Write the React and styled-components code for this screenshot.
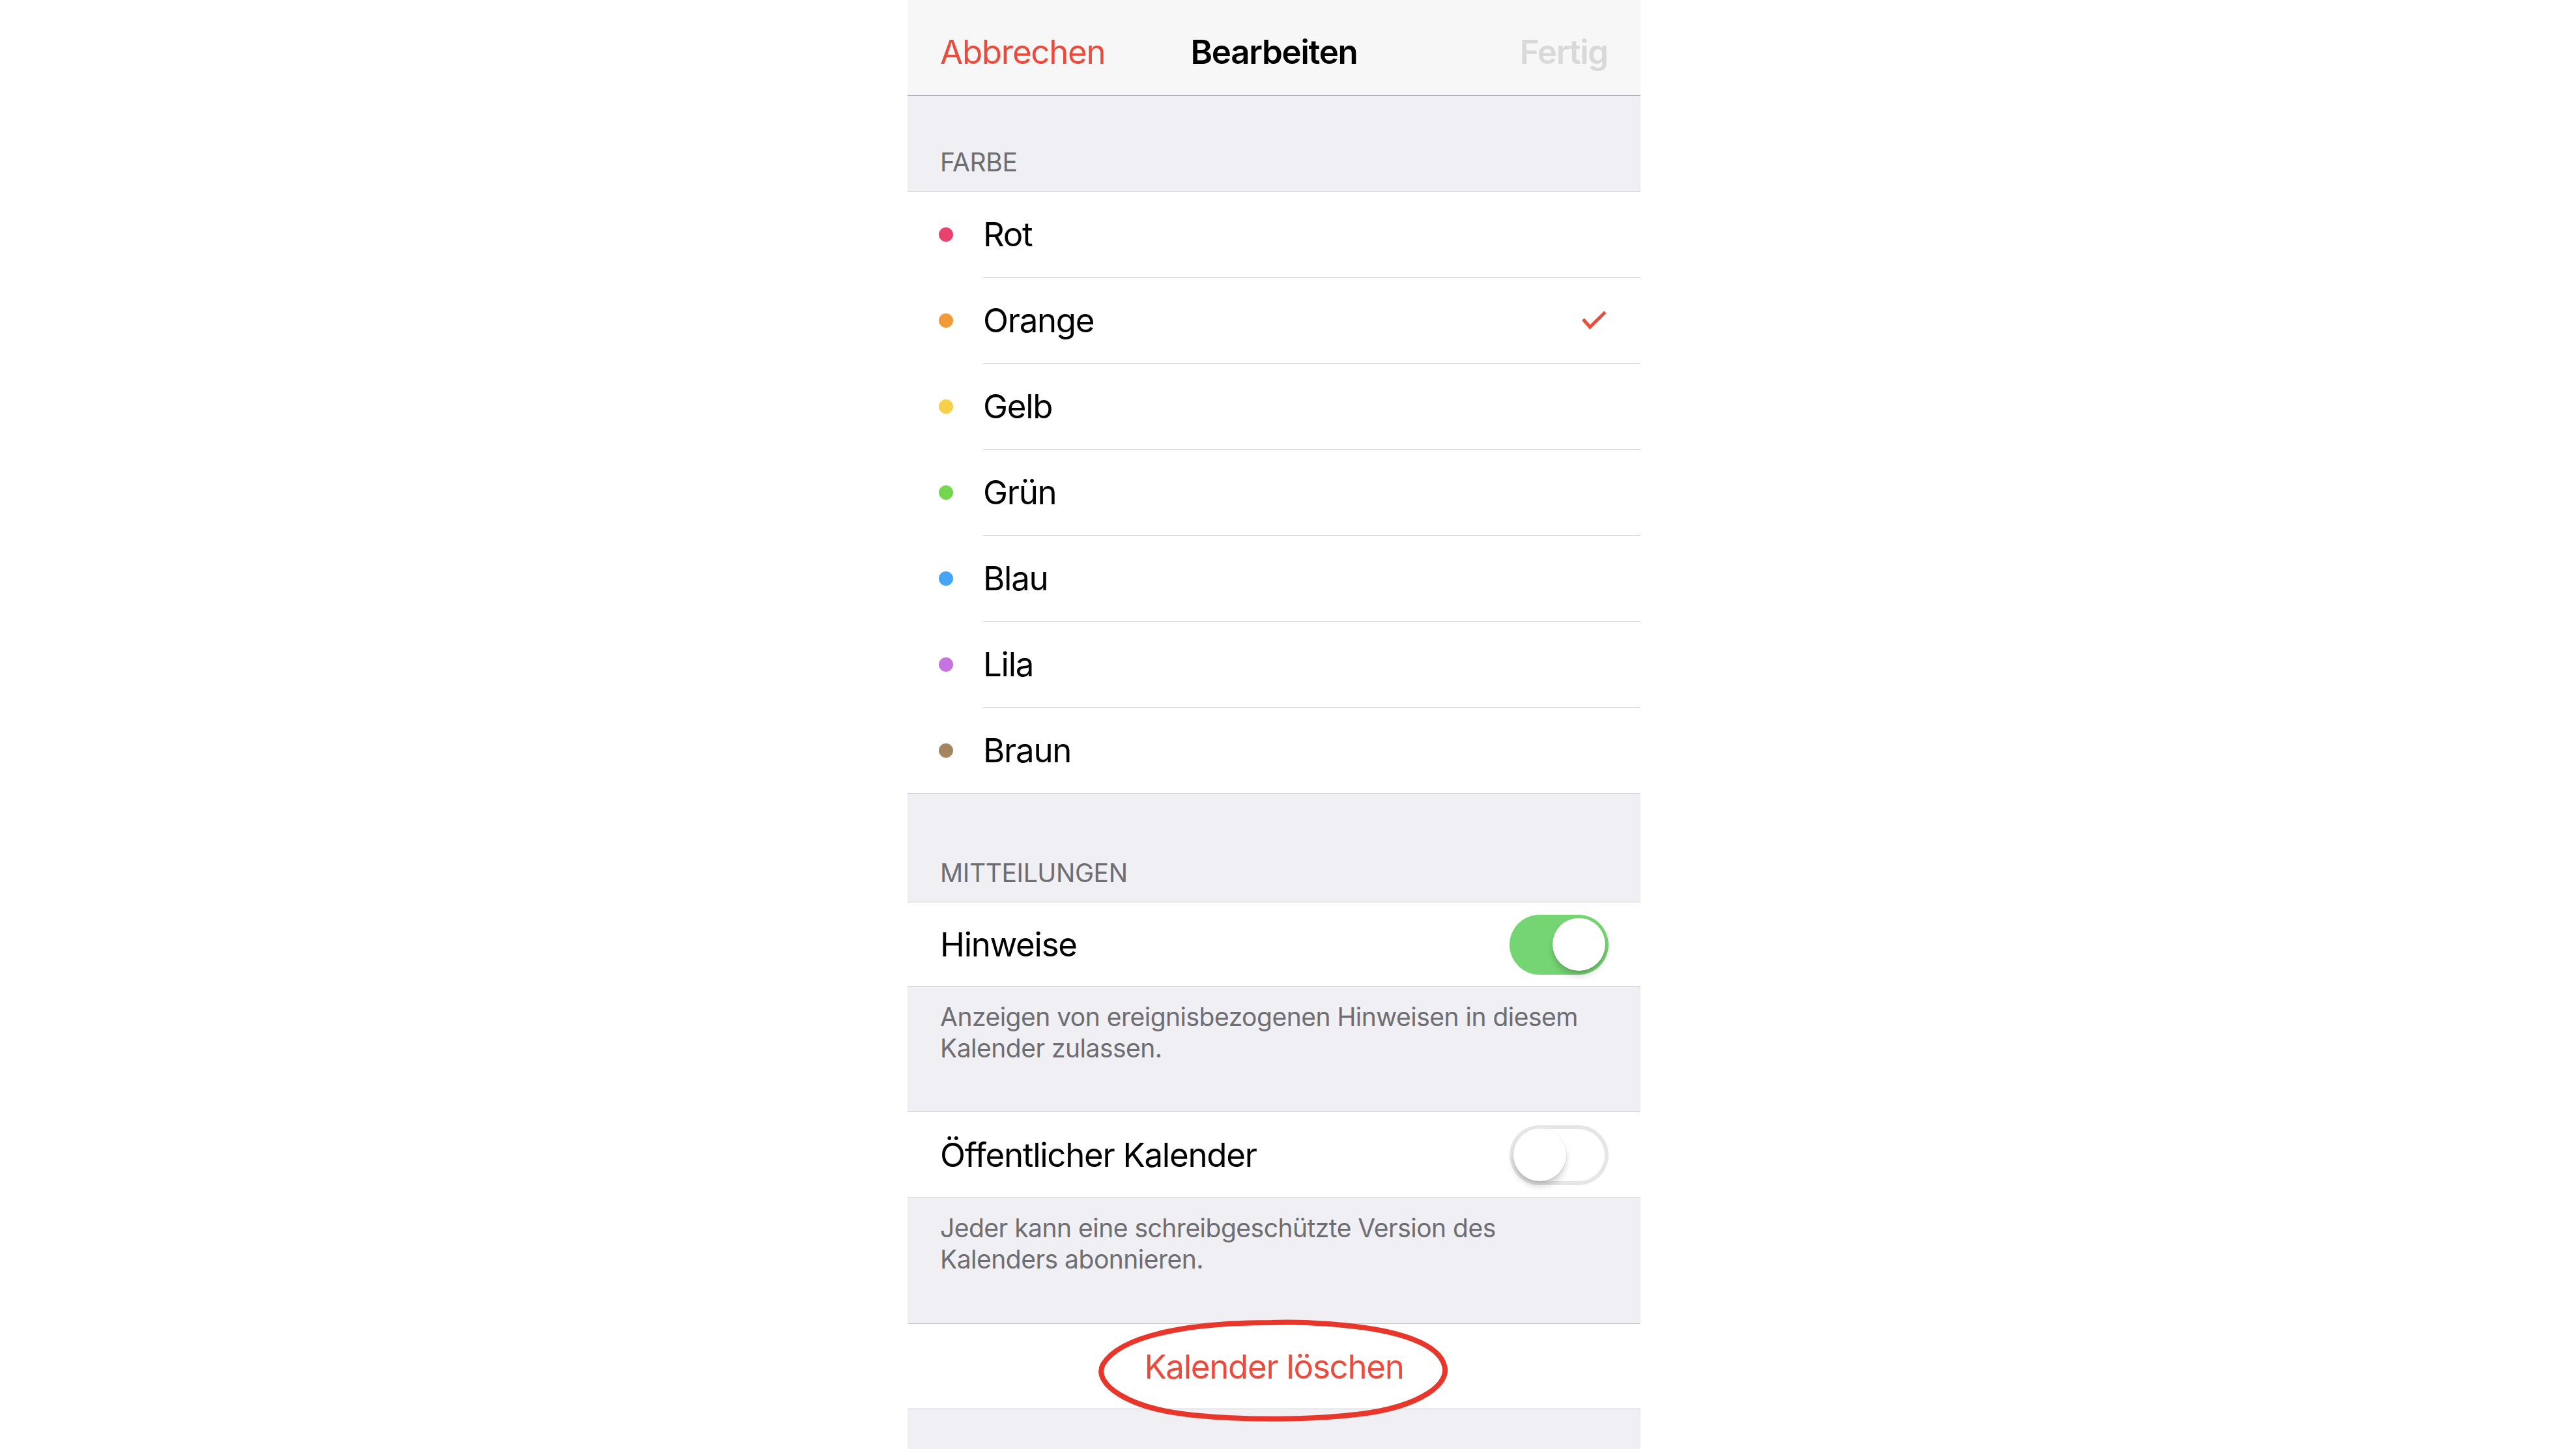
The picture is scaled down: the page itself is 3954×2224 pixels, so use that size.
import React from "react";
import styled, { createGlobalStyle } from "styled-components";

const Global = createGlobalStyle`
  html, body { margin: 0; padding: 0; background: #ffffff; }
  body { font-family: Inter, "Noto Sans", "Liberation Sans", sans-serif; -webkit-font-smoothing: antialiased; }
`;

const Page = styled.div`
  display: flex;
  justify-content: flex-start;
  padding-left: 1393px;
  min-height: 100vh;
  background: #ffffff;
`;

const Panel = styled.div`
  width: 1125px;
  min-height: 2224px;
  background: #efeff4;
  display: flex;
  flex-direction: column;
  font-family: Inter, "Noto Sans", "Liberation Sans", sans-serif;
`;

const NavBar = styled.div`
  box-sizing: border-box;
  height: 147px;
  padding: 13px 50px 0;
  background: #f7f7f7;
  border-bottom: 1px solid #acacb0;
  display: grid;
  grid-template-columns: 1fr auto 1fr;
  align-items: center;
  font-size: 51px;
  letter-spacing: -0.025em;
`;

const NavButton = styled.span`
  justify-self: ${(p) => (p.$end ? "end" : "start")};
  color: ${(p) => (p.$disabled ? "#d9d9d9" : "#ec4b3c")};
  font-weight: ${(p) => (p.$bold ? 600 : 400)};
`;

const NavTitle = styled.span`
  color: #000;
  font-weight: 600;
`;

const SectionHeader = styled.div`
  box-sizing: border-box;
  height: ${(p) => p.$h}px;
  display: flex;
  align-items: flex-end;
  padding: 0 50px 20px;
  font-size: 39px;
  line-height: 48px;
  color: #6d6d72;
  text-transform: uppercase;
  letter-spacing: -0.01em;
`;

const Group = styled.div`
  position: relative;
  background: #ffffff;
  border-top: 1px solid #c8c7cc;
  border-bottom: 1px solid #c8c7cc;
`;

const ColorRow = styled.div`
  display: flex;
  align-items: stretch;
`;

const DotCell = styled.div`
  width: 116px;
  flex: none;
  display: flex;
  align-items: center;
  padding-left: 48px;
  box-sizing: border-box;
`;

const Dot = styled.span`
  width: 22px;
  height: 22px;
  border-radius: 50%;
  background: ${(p) => p.$color};
`;

const RowContent = styled.div`
  flex: 1;
  height: 131px;
  display: flex;
  align-items: center;
  justify-content: space-between;
  padding-right: 52px;
  border-bottom: ${(p) => (p.$last ? "none" : "1px solid #c8c7cc")};
`;

const Label = styled.span`
  font-size: 51px;
  color: #000;
  letter-spacing: -0.025em;
`;

const ToggleRow = styled.div`
  height: ${(p) => p.$h}px;
  display: flex;
  align-items: center;
  justify-content: space-between;
  padding: 0 49px 0 50px;
`;

const Track = styled.span`
  box-sizing: border-box;
  width: 152px;
  height: 92px;
  border-radius: 46px;
  padding: 0 ${(p) => (p.$on ? 5 : 6)}px;
  display: flex;
  align-items: center;
  justify-content: ${(p) => (p.$on ? "flex-end" : "flex-start")};
  background: ${(p) => (p.$on ? "#75d572" : "#ffffff")};
  box-shadow: ${(p) => (p.$on ? "none" : "inset 0 0 0 6px #e6e6e8")};
`;

const Knob = styled.span`
  width: 81px;
  height: 81px;
  border-radius: 50%;
  background: #ffffff;
  box-shadow: 0 8px 10px rgba(0, 0, 0, 0.16), 0 2px 2px rgba(0, 0, 0, 0.08),
    0 0 0 1px rgba(0, 0, 0, 0.03);
`;

const Footer = styled.div`
  box-sizing: border-box;
  height: ${(p) => p.$h}px;
  padding: 22px 50px 0;
  font-size: 39px;
  line-height: 48px;
  color: #6d6d72;
  letter-spacing: -0.013em;
`;

const ActionRow = styled.div`
  position: relative;
  height: 130px;
  display: flex;
  align-items: center;
  justify-content: center;
`;

const ActionText = styled.span`
  font-size: 51px;
  color: #ec4b3c;
  letter-spacing: -0.025em;
`;

const Annotation = styled.svg`
  position: absolute;
  left: 288px;
  top: -8px;
  width: 548px;
  height: 160px;
  overflow: visible;
  pointer-events: none;
`;

const Filler = styled.div`
  flex: 1;
  background: #efeff4;
`;

const Check = () => (
  <svg width="38" height="30" viewBox="0 0 38 30">
    <polyline
      points="2,13 12.5,25 36,2"
      fill="none"
      stroke="#eb4d3d"
      strokeWidth="5"
      strokeLinecap="butt"
      strokeLinejoin="miter"
    />
  </svg>
);

const colors = [
  { name: "Rot", color: "#ea426f" },
  { name: "Orange", color: "#f09b38", checked: true },
  { name: "Gelb", color: "#f7cf48" },
  { name: "Grün", color: "#74d64c" },
  { name: "Blau", color: "#45a4f6" },
  { name: "Lila", color: "#c672e0" },
  { name: "Braun", color: "#a3865f" },
];

export default function App() {
  return (
    <>
      <Global />
      <Page>
        <Panel>
          <NavBar>
            <NavButton>Abbrechen</NavButton>
            <NavTitle>Bearbeiten</NavTitle>
            <NavButton $end $disabled $bold>
              Fertig
            </NavButton>
          </NavBar>

          <SectionHeader $h={146}>Farbe</SectionHeader>
          <Group>
            {colors.map((c, i) => (
              <ColorRow key={c.name}>
                <DotCell>
                  <Dot $color={c.color} />
                </DotCell>
                <RowContent $last={i === colors.length - 1}>
                  <Label>{c.name}</Label>
                  {c.checked && <Check />}
                </RowContent>
              </ColorRow>
            ))}
          </Group>

          <SectionHeader $h={166}>Mitteilungen</SectionHeader>
          <Group>
            <ToggleRow $h={129}>
              <Label>Hinweise</Label>
              <Track $on>
                <Knob />
              </Track>
            </ToggleRow>
          </Group>
          <Footer $h={191}>
            Anzeigen von ereignisbezogenen Hinweisen in diesem
            <br />
            Kalender zulassen.
          </Footer>

          <Group>
            <ToggleRow $h={131}>
              <Label>Öffentlicher Kalender</Label>
              <Track>
                <Knob />
              </Track>
            </ToggleRow>
          </Group>
          <Footer $h={192}>
            Jeder kann eine schreibgeschützte Version des
            <br />
            Kalenders abonnieren.
          </Footer>

          <Group>
            <ActionRow>
              <ActionText>Kalender löschen</ActionText>
              <Annotation viewBox="0 0 548 160">
                <path
                  d="M 270 6 C 150 6, 40 24, 12 70 C -4 100, 50 138, 150 148 C 230 156, 330 156, 410 146 C 500 134, 545 100, 536 72 C 528 40, 470 18, 380 10 C 340 6, 300 5, 270 6 Z"
                  fill="none"
                  stroke="#e8372a"
                  strokeWidth="8"
                  strokeLinejoin="round"
                />
              </Annotation>
            </ActionRow>
          </Group>
          <Filler />
        </Panel>
      </Page>
    </>
  );
}
